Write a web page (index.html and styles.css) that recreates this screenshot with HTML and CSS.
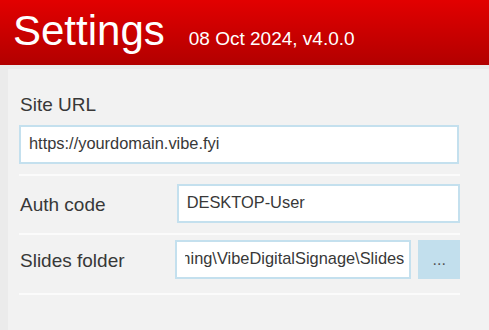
FILE: index.html
```html
<!DOCTYPE html>
<html lang="en">
<head>
    <meta charset="utf-8">
    <title>Settings</title>
    <link rel="stylesheet" href="styles.css">
</head>
<body>
    <div class="header">
        <h1 class="title">Settings</h1>
        <span class="version">08 Oct 2024, v4.0.0</span>
    </div>

    <div class="panel">
        <div class="row first">
            <label class="label top">Site URL</label>
            <input class="field" type="text" value="https://yourdomain.vibe.fyi">
        </div>

        <div class="row second">
            <label class="label">Auth code</label>
            <input class="field" type="text" value="DESKTOP-User">
        </div>

        <div class="row third">
            <label class="label">Slides folder</label>
            <input class="field path" type="text" value="C:\Users\User\AppData\Roaming\VibeDigitalSignage\Slides">
            <button class="browse">...</button>
        </div>
    </div>
</body>
</html>
```

FILE: styles.css
```css
body{
    margin: 0;
    background-color: #ebebeb;
    font-family: "Liberation Sans", Arial, sans-serif;
    color: #383838;
    overflow: hidden;
}

.header{
    display: flex;
    align-items: baseline;
    height: 65px;
    box-sizing: border-box;
    padding: 10px 0 0 13px;
    background: linear-gradient(#e20000, #b20000);
    color: #fff;
}
.title{
    margin: 0;
    font-size: 42px;
    font-weight: normal;
    line-height: 1;
}
.version{
    margin-left: 24px;
    font-size: 19px;
}

.panel{
    margin: 4px 0 0 8px;
    padding: 25px 0 0 11px;
    height: 245px;
    background-color: #f2f2f2;
}

.row{
    width: 441px;
    border-bottom: 2px solid #fbfbfb;
}
.second, .third{
    display: flex;
    align-items: center;
}
.first{
    padding-bottom: 10px;
}
.second{
    padding: 8px 0 10px;
}
.third{
    padding: 5px 0 14px;
}

.label{
    display: block;
    width: 158px;
    margin-top: 3px;
    padding-left: 1px;
    box-sizing: border-box;
    font-size: 19px;
    line-height: 22px;
}
.label.top{
    margin: 0 0 9px;
}

.field{
    display: block;
    width: 440px;
    height: 39px;
    box-sizing: border-box;
    padding: 0 8px 2px;
    border: 2px solid #c4e0ee;
    background-color: #fff;
    font-family: "Liberation Sans", Arial, sans-serif;
    font-size: 16.4px;
    color: #383838;
    outline: none;
}
.second .field{
    width: 284px;
}
.field.path{
    width: 236px;
    padding-right: 5px;
    direction: rtl;
}

.browse{
    width: 42px;
    height: 39px;
    margin-left: 7px;
    border: none;
    background-color: #c2dfed;
    font-family: "Liberation Sans", Arial, sans-serif;
    font-size: 16px;
    color: #555;
}
```
